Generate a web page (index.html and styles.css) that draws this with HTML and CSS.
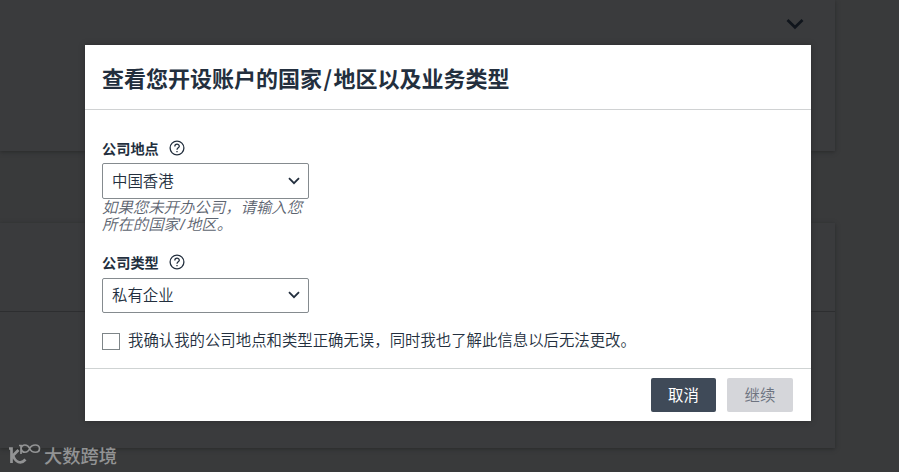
FILE: index.html
```html
<!DOCTYPE html>
<html lang="zh-CN">
<head>
<meta charset="utf-8">
<title>查看您开设账户的国家/地区以及业务类型</title>
<link rel="stylesheet" href="styles.css">
</head>
<body>
<div class="page">
  <section class="card card-first">
    <svg class="card-chevron" width="20" height="12" viewBox="0 0 20 12"><path d="M2.5 2 L10 9.3 L17.5 2" fill="none" stroke="#10151c" stroke-width="2.7"/></svg>
  </section>
  <section class="card card-second"><div class="card-head"></div></section>
</div>
<div class="overlay">
  <div class="modal" role="dialog">
    <header class="modal-header"><h1>查看您开设账户的国家<span class="slash">/</span>地区以及业务类型</h1></header>
    <main class="modal-body">
      <div class="label">公司地点
        <svg class="help" width="16" height="16" viewBox="0 0 16 16"><circle cx="8" cy="8" r="6.9"/><path d="M5.8 6.4C5.8 3.5 10.3 3.5 10.3 6.2C10.3 7.9 8 7.8 8 9.7M8 10.9V12.3"/></svg>
      </div>
      <div class="select"><span>中国香港</span><svg width="12" height="8" viewBox="0 0 12 8"><path d="M1 1.2L6 6.2L11 1.2"/></svg></div>
      <p class="hint">如果您未开办公司，请输入您<br>所在的国家<span class="hint-slash">/</span>地区。</p>
      <div class="label">公司类型
        <svg class="help" width="16" height="16" viewBox="0 0 16 16"><circle cx="8" cy="8" r="6.9"/><path d="M5.8 6.4C5.8 3.5 10.3 3.5 10.3 6.2C10.3 7.9 8 7.8 8 9.7M8 10.9V12.3"/></svg>
      </div>
      <div class="select select-type"><span>私有企业</span><svg width="12" height="8" viewBox="0 0 12 8"><path d="M1 1.2L6 6.2L11 1.2"/></svg></div>
      <div class="confirm"><span class="checkbox"></span><span>我确认我的公司地点和类型正确无误，同时我也了解此信息以后无法更改。</span></div>
    </main>
    <footer class="modal-footer">
      <div class="button cancel">取消</div>
      <div class="button continue">继续</div>
    </footer>
  </div>
</div>
<div class="watermark">
  <svg width="33" height="22" viewBox="0 0 33 22"><path d="M1 5.5H3.5V20M4.5 13L10.5 7M5 12C7 19.5 13 21.5 17.5 16.5" stroke-width="2.7"/><path d="M11 2.5H13V11M13 5.5C14 .8 19.5 .8 21.7 5.5C23.8 10.5 31.5 10.5 31.5 5.5C31.5 .8 23.8 .8 21.7 5.5C19.5 10.5 14 10.5 13 5.5" stroke-width="1.7"/></svg>
  <span>大数跨境</span>
</div>
</body>
</html>
```
FILE: styles.css
```css
* { box-sizing: border-box; }
body {
  margin: 0;
  width: 899px;
  height: 472px;
  overflow: hidden;
  background: #393a3b;
  color: #232f3e;
  font: 350 15.4px/18px "Noto Sans CJK SC", sans-serif;
}
.page { width: 835px; }
.card { background: #3a3b3d; box-shadow: 0 1px 4px #292a2b; }
.card-first { height: 151px; display: flex; justify-content: flex-end; padding: 18px 30px 0 0; }
.card-second { height: 225px; margin-top: 72px; }
.card-head { height: 89px; border-bottom: 1px solid #2d2e30; }
.overlay { position: absolute; inset: 0; padding: 45px 0 0 85px; }
.modal { width: 726px; height: 376px; display: flex; flex-direction: column; background: #fff; box-shadow: 0 0 5px #2b2c2d; }
.modal-header { height: 65px; padding: 16px 17px 0; border-bottom: 1px solid #d0d2d3; }
h1 { margin: 0; font-size: 22px; line-height: 32px; font-weight: 700; white-space: nowrap; }
.slash { display: inline-block; width: 11.5px; text-align: center; }
.modal-body { flex: 1; padding: 29px 17px 0; }
.label { display: flex; align-items: center; gap: 10px; height: 18px; font-size: 14.2px; line-height: 16px; padding-bottom: 1px; font-weight: 700; }
.help { fill: none; stroke: #232f3e; stroke-width: 1.3; }
.select { display: flex; justify-content: space-between; align-items: center; width: 207px; height: 36px; margin-top: 6px; padding: 0 8px 0 9px; border: 1px solid #858b8f; border-radius: 2px; }
.select span { padding-bottom: 3px; }
.select svg { fill: none; stroke: #232f3e; stroke-width: 1.8; margin-bottom: 1px; }
.hint { margin: 0 0 20px; font-family: "Liberation Sans", "Noto Sans CJK SC", sans-serif; line-height: 17px; font-style: italic; color: #5d6470; white-space: nowrap; }
.hint-slash { display: inline-block; width: 7px; text-align: center; }
.select-type { height: 35px; margin-top: 7px; }
.confirm { display: flex; gap: 8px; margin-top: 17px; white-space: nowrap; }
.checkbox { width: 18px; height: 17px; margin-top: 3px; border: 1px solid #7e8588; }
.modal-footer { display: flex; justify-content: flex-end; gap: 11px; height: 53px; padding: 9px 18px 0 0; border-top: 1px solid #cfd3d3; }
.button { width: 65px; height: 34px; border-radius: 2px; text-align: center; line-height: 32px; }
.cancel { background: #3f4a58; color: #fff; font-weight: 400; }
.continue { width: 66px; background: #d5d6da; color: #6d7380; }
.watermark { position: absolute; left: 8px; top: 443px; display: flex; gap: 3px; color: #929394; font-size: 18.3px; line-height: 24px; font-weight: 500; }
.watermark svg { fill: none; stroke: #929394; }
```
